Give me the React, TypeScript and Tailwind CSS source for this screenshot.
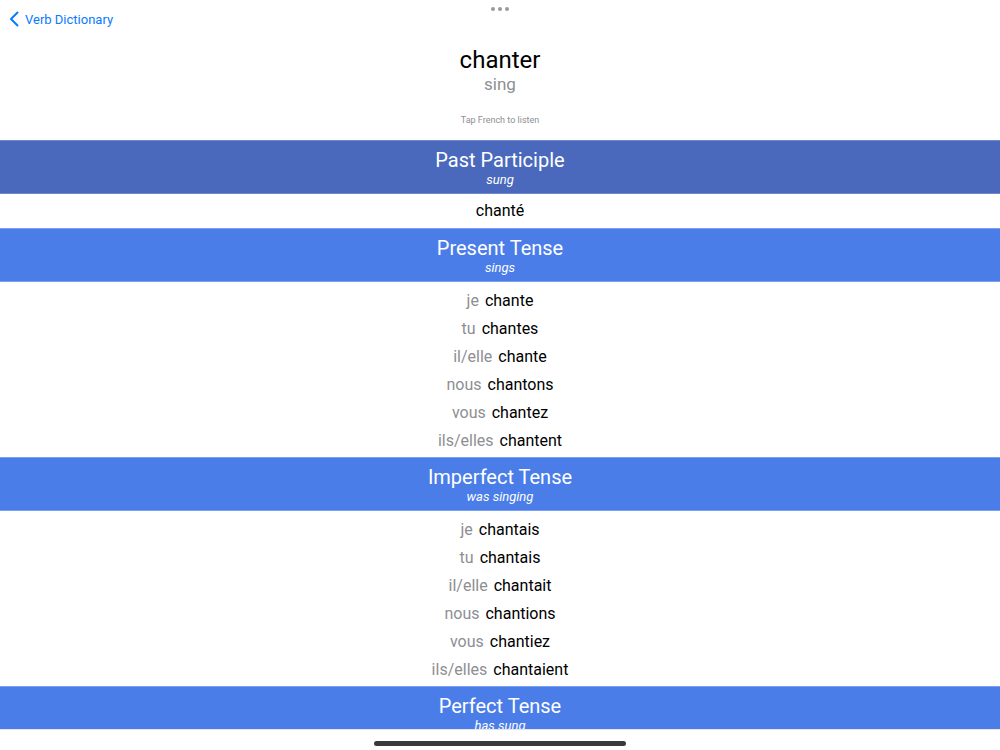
import React from 'react';

interface Form {
  pronoun: string;
  verb: string;
}

const present: Form[] = [
  { pronoun: 'je', verb: 'chante' },
  { pronoun: 'tu', verb: 'chantes' },
  { pronoun: 'il/elle', verb: 'chante' },
  { pronoun: 'nous', verb: 'chantons' },
  { pronoun: 'vous', verb: 'chantez' },
  { pronoun: 'ils/elles', verb: 'chantent' },
];

const imperfect: Form[] = [
  { pronoun: 'je', verb: 'chantais' },
  { pronoun: 'tu', verb: 'chantais' },
  { pronoun: 'il/elle', verb: 'chantait' },
  { pronoun: 'nous', verb: 'chantions' },
  { pronoun: 'vous', verb: 'chantiez' },
  { pronoun: 'ils/elles', verb: 'chantaient' },
];

const TenseHeader: React.FC<{ title: string; gloss: string; dark?: boolean }> = ({ title, gloss, dark }) => (
  <div
    className={`h-[54px] shrink-0 flex flex-col items-center pt-[7px] border-y ${
      dark ? 'bg-[#4a69bd] border-[#6e88cf]' : 'bg-[#4b7de9] border-[#7a9ff0]'
    }`}
  >
    <div className="text-[20px] leading-[24px] text-white">{title}</div>
    <div className="text-[13px] leading-[16px] italic text-white">{gloss}</div>
  </div>
);

const FormList: React.FC<{ forms: Form[] }> = ({ forms }) => (
  <div className="pt-[5px] pb-[2px]">
    {forms.map((f, i) => (
      <div key={i} className="h-[28px] flex items-center justify-center text-[16px]">
        <span className="text-[#8e8e93]">{f.pronoun}</span>
        <span className="ml-[6px] text-black">{f.verb}</span>
      </div>
    ))}
  </div>
);

export default function App() {
  return (
    <div
      className="w-[1000px] h-[750px] bg-white flex flex-col overflow-hidden"
      style={{ fontFamily: 'Roboto, "Noto Sans", sans-serif' }}
    >
      <div className="relative h-[140px] shrink-0">
        <div className="absolute left-1/2 -translate-x-1/2 top-[7px] flex gap-[3px]">
          <span className="w-[4px] h-[4px] rounded-full bg-[#9a9a9e]" />
          <span className="w-[4px] h-[4px] rounded-full bg-[#9a9a9e]" />
          <span className="w-[4px] h-[4px] rounded-full bg-[#9a9a9e]" />
        </div>
        <div className="absolute left-[9px] top-[10px] flex items-center text-[#0a7aff]">
          <svg width="11" height="16" viewBox="0 0 11 16" fill="none">
            <path d="M8.5 1.5 L2 8 L8.5 14.5" stroke="#0a7aff" strokeWidth="2" strokeLinecap="round" strokeLinejoin="round" />
          </svg>
          <span className="ml-[5px] mt-[2px] text-[13px] leading-[16px]">Verb Dictionary</span>
        </div>
        <div className="flex flex-col items-center pt-[45px]">
          <div className="text-[24px] leading-[30px] text-black">chanter</div>
          <div className="-mt-[1px] text-[17px] leading-[20px] text-[#8e8e93]">sing</div>
          <div className="mt-[20px] text-[9px] leading-[12px] text-[#8e8e93]">Tap French to listen</div>
        </div>
      </div>
      <div className="h-[589px] shrink-0 overflow-hidden flex flex-col">
        <TenseHeader title="Past Participle" gloss="sung" dark />
        <div className="h-[34px] shrink-0 flex items-center justify-center text-[16px] text-black">chanté</div>
        <TenseHeader title="Present Tense" gloss="sings" />
        <FormList forms={present} />
        <TenseHeader title="Imperfect Tense" gloss="was singing" />
        <FormList forms={imperfect} />
        <TenseHeader title="Perfect Tense" gloss="has sung" />
      </div>
      <div className="flex-1 flex justify-center pt-[11px] border-t border-[#e5e5ea]">
        <div className="w-[252px] h-[5px] rounded-full bg-[#3a3a3c]" />
      </div>
    </div>
  );
}
